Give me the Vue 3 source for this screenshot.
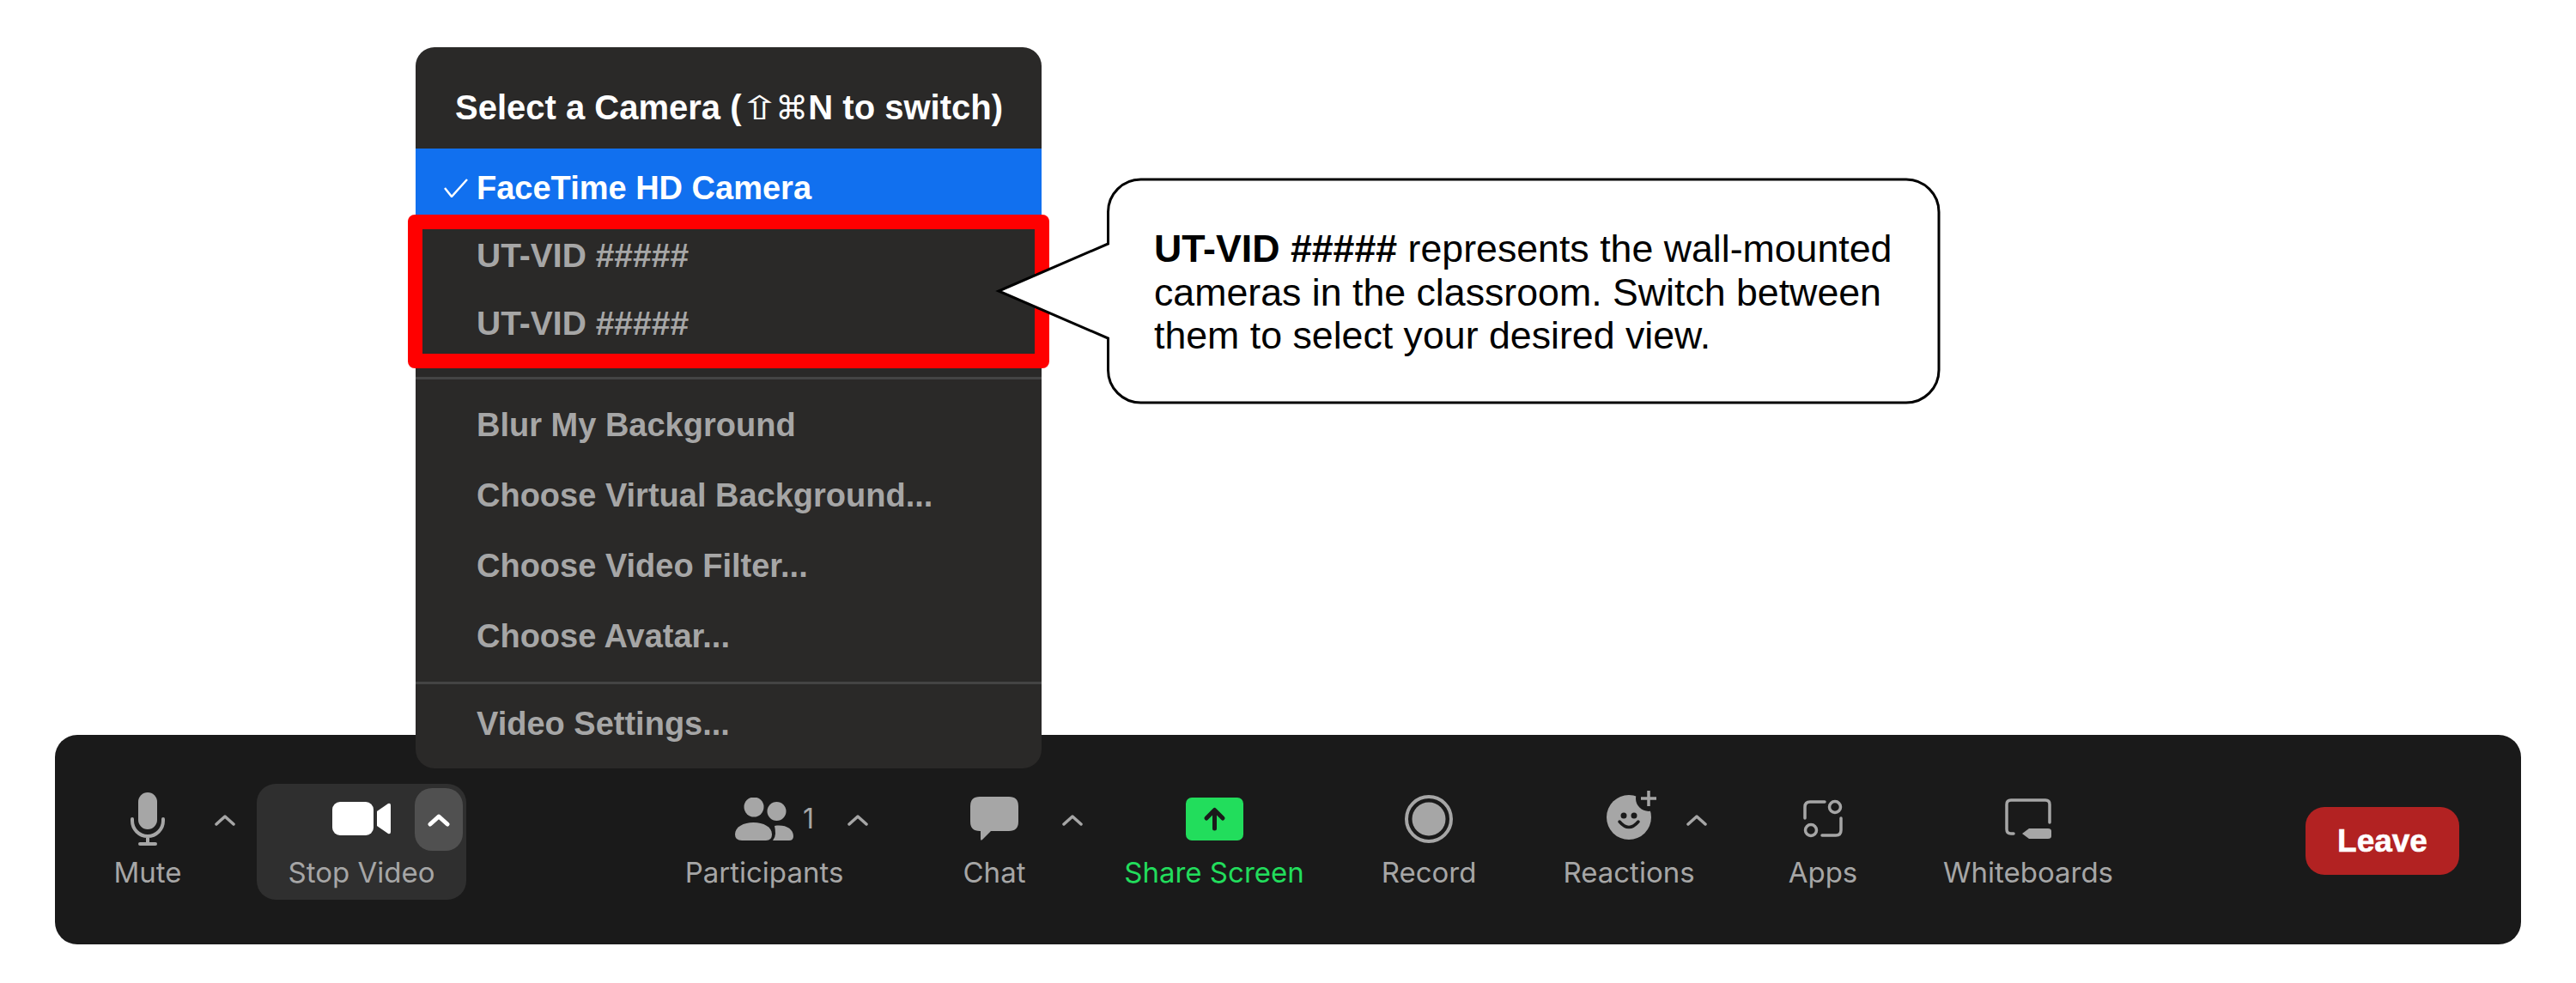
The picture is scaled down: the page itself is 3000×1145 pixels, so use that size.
<script setup>
const devices = ['UT-VID #####', 'UT-VID #####']
const backgrounds = ['Blur My Background', 'Choose Virtual Background...', 'Choose Video Filter...', 'Choose Avatar...']
</script>

<template>
  <div class="page">
    <!-- camera popup, sits over the toolbar -->
    <div class="menu">
      <div class="menu-title">Select a Camera (<span class="keys shift">⇧</span><span class="keys">⌘</span>N to switch)</div>
      <div class="menu-row selected">
        <svg class="check" width="28" height="22" viewBox="0 0 28 22">
          <path d="M1 11 L9 21 L27 1" fill="none" stroke="#fff" stroke-width="2.5" />
        </svg>
        FaceTime HD Camera
      </div>
      <div class="device-row" v-for="(d, i) in devices" :key="i">{{ d }}</div>
      <div class="sep first-sep"></div>
      <div class="menu-row" v-for="b in backgrounds" :key="b">{{ b }}</div>
      <div class="sep"></div>
      <div class="menu-row">Video Settings...</div>
    </div>

    <div class="highlight"></div>

    <div class="callout">
      <svg class="callout-shape" width="1102" height="266" viewBox="0 0 1102 266">
        <path
          d="M130.5 40 A38 38 0 0 1 168.5 2 H1060 A38 38 0 0 1 1098 40 V224 A38 38 0 0 1 1060 262 H168.5 A38 38 0 0 1 130.5 224 V187 L3 132 L130.5 77 Z"
          fill="#fff" stroke="#000" stroke-width="3" />
      </svg>
      <p class="callout-text">
        <b>UT-VID #####</b> represents the wall-mounted<br>
        cameras in the classroom. Switch between<br>
        them to select your desired view.
      </p>
    </div>

    <div class="toolbar">
      <div class="tool mute">
        <div class="icon">
          <svg width="40" height="62" viewBox="0 0 40 62">
            <rect x="9" y="0" width="22" height="43" rx="11" fill="#a6a6a6" />
            <path d="M2 31 v2 a18 18 0 0 0 36 0 v-2 M20 51 v9 M11 60 h18" fill="none" stroke="#a6a6a6" stroke-width="4" stroke-linecap="round" />
          </svg>
          <svg class="caret" width="24" height="14" viewBox="0 0 24 14"><path d="M2 12 L12 3 L22 12" /></svg>
        </div>
        <div class="label">Mute</div>
      </div>

      <div class="tool video">
        <div class="icon">
          <svg width="68" height="39" viewBox="0 0 68 39">
            <rect width="48" height="39" rx="9" fill="#fff" />
            <path d="M52 11 L65 2 Q68 1 68 4 V35 Q68 38 65 37 L52 28 Z" fill="#fff" />
          </svg>
          <div class="caret-box">
            <svg width="26" height="16" viewBox="0 0 26 16"><path d="M3 13 L13 4 L23 13" fill="none" stroke="#fff" stroke-width="5" stroke-linecap="round" stroke-linejoin="round" /></svg>
          </div>
        </div>
        <div class="label">Stop Video</div>
      </div>

      <div class="tool participants">
        <div class="icon">
          <svg width="68" height="50" viewBox="0 0 68 50" fill="#a6a6a6">
            <circle cx="22" cy="11" r="11.5" />
            <circle cx="48.5" cy="16" r="11" />
            <path d="M8 50 Q0 50 0 43 C0 34 10 29 21.5 29 C33 29 43 34 43 43 Q43 50 36 50 Z" />
            <path d="M46 33 C58 31 68 36 68 45 Q68 50 63 50 H44 Q47 46 47 42 Q47 37 46 33 Z" />
          </svg>
          <span class="count">1</span>
          <svg class="caret" width="24" height="14" viewBox="0 0 24 14"><path d="M2 12 L12 3 L22 12" /></svg>
        </div>
        <div class="label">Participants</div>
      </div>

      <div class="tool chat">
        <div class="icon">
          <svg width="56" height="51" viewBox="0 0 56 51">
            <path d="M11 0 H45 Q56 0 56 11 V29 Q56 40 45 40 H24 L14 50 Q12 52 12 49 V40 H11 Q0 40 0 29 V11 Q0 0 11 0 Z" fill="#a6a6a6" />
          </svg>
          <svg class="caret" width="24" height="14" viewBox="0 0 24 14"><path d="M2 12 L12 3 L22 12" /></svg>
        </div>
        <div class="label">Chat</div>
      </div>

      <div class="tool share">
        <div class="icon">
          <svg width="67" height="50" viewBox="0 0 67 50">
            <rect width="67" height="50" rx="7" fill="#22dd5c" />
            <path d="M33.5 36 V15 M24 24 L33.5 14.5 L43 24" fill="none" stroke="#1a1a1a" stroke-width="5" stroke-linecap="round" stroke-linejoin="round" />
          </svg>
        </div>
        <div class="label">Share Screen</div>
      </div>

      <div class="tool record">
        <div class="icon">
          <svg width="56" height="56" viewBox="0 0 56 56">
            <circle cx="28" cy="28" r="26" fill="none" stroke="#a6a6a6" stroke-width="4" />
            <circle cx="28" cy="28" r="19.5" fill="#a6a6a6" />
          </svg>
        </div>
        <div class="label">Record</div>
      </div>

      <div class="tool reactions">
        <div class="icon">
          <svg class="smile" width="64" height="58" viewBox="0 0 64 58">
            <circle cx="32" cy="32" r="26" fill="#a6a6a6" />
            <circle cx="55" cy="10" r="15" fill="#1a1a1a" />
            <path d="M55 1 V19 M46 10 H64" fill="none" stroke="#a6a6a6" stroke-width="3.5" />
            <circle cx="26" cy="30" r="3.5" fill="#1a1a1a" />
            <circle cx="38" cy="30" r="3.5" fill="#1a1a1a" />
            <path d="M21 37 Q32 50 43 37" fill="none" stroke="#1a1a1a" stroke-width="3.5" stroke-linecap="round" />
          </svg>
          <svg class="caret" width="24" height="14" viewBox="0 0 24 14"><path d="M2 12 L12 3 L22 12" /></svg>
        </div>
        <div class="label">Reactions</div>
      </div>

      <div class="tool apps">
        <div class="icon">
          <svg width="46" height="45" viewBox="0 0 46 45" fill="none" stroke="#a6a6a6" stroke-width="3.5" stroke-linecap="round">
            <path d="M2 22 V9 Q2 3 8 3 H25" />
            <circle cx="37" cy="9" r="6.5" />
            <circle cx="9" cy="36" r="6.5" />
            <path d="M44 22 V36 Q44 42 38 42 H22" />
          </svg>
        </div>
        <div class="label">Apps</div>
      </div>

      <div class="tool boards">
        <div class="icon">
          <svg width="54" height="47" viewBox="0 0 54 47">
            <path d="M10 41 H7 Q2 41 2 36 V7 Q2 2 7 2 H47 Q52 2 52 7 V28" fill="none" stroke="#a6a6a6" stroke-width="3.5" stroke-linecap="round" />
            <path d="M20 41 L28 35 H50 Q54 35 54 38 V44 Q54 47 50 47 H28 Z" fill="#a6a6a6" />
          </svg>
        </div>
        <div class="label">Whiteboards</div>
      </div>

      <div class="leave">Leave</div>
    </div>
  </div>
</template>

<style scoped>
.page {
  position: relative;
  width: 3000px;
  height: 1145px;
  box-sizing: border-box;
  padding: 0 64px 45px;
  display: flex;
  flex-direction: column;
  justify-content: flex-end;
  background: #fff;
  font-family: "Liberation Sans", "DejaVu Sans", sans-serif;
  overflow: hidden;
}

/* popup */
.menu {
  position: absolute;
  z-index: 2;
  left: 484px;
  top: 55px;
  width: 729px;
  height: 840px;
  background: #2a2928;
  border-radius: 22px;
  overflow: hidden;
  font-weight: 700;
  font-size: 38px;
  color: #a6a6a6;
}
.menu-title {
  height: 118px;
  line-height: 141px;
  padding-left: 46px;
  color: #fff;
  font-size: 40px;
  white-space: nowrap;
}
.keys {
  display: inline-block;
  font-family: "DejaVu Sans", sans-serif;
  font-weight: 400;
  font-size: 38px;
  line-height: 1;
}
.shift {
  margin: 0 3px 0 5px;
  transform: scaleX(1.5);
}
.menu-row {
  height: 82px;
  line-height: 82px;
  padding-left: 71px;
  position: relative;
}
.menu-row.selected {
  height: 85px;
  line-height: 93px;
  background: #1170ef;
  color: #fff;
}
.check {
  position: absolute;
  left: 33px;
  top: 35px;
}
.device-row {
  height: 79px;
  line-height: 79px;
  padding-left: 71px;
  font-size: 39px;
}
.sep {
  height: 3px;
  margin: 12px 0 5px;
  background: #444;
}
.first-sep {
  margin: 23px 0 12px;
}

.highlight {
  position: absolute;
  z-index: 3;
  left: 475px;
  top: 250px;
  width: 747px;
  height: 179px;
  box-sizing: border-box;
  border: 17px solid #f00;
  border-radius: 8px;
}

.callout {
  position: absolute;
  z-index: 4;
  left: 1160px;
  top: 207px;
  width: 1102px;
  height: 266px;
}
.callout-shape {
  position: absolute;
  left: 0;
  top: 0;
  overflow: visible;
}
.callout-text {
  position: relative;
  margin: 0;
  padding: 58px 0 0 184px;
  font-size: 44.7px;
  line-height: 50.5px;
  color: #000;
  white-space: nowrap;
}

/* bottom bar */
.toolbar {
  height: 244px;
  box-sizing: border-box;
  padding: 57px 72px 0 46px;
  display: flex;
  align-items: flex-start;
  background: #1a1a1a;
  border-radius: 26px;
}
.tool {
  height: 135px;
  flex: none;
}
.icon {
  position: relative;
  height: 81px;
  display: flex;
  align-items: center;
  justify-content: center;
}
.label {
  height: 44px;
  line-height: 44px;
  text-align: center;
  font-family: Inter, "Liberation Sans", sans-serif;
  font-size: 33px;
  color: #a6a6a6;
  white-space: nowrap;
}
.caret {
  position: absolute;
  top: 35px;
  fill: none;
  stroke: #a6a6a6;
  stroke-width: 3.5;
  stroke-linecap: round;
  stroke-linejoin: round;
}
.mute { width: 124px; }
.mute .caret { left: 140px; }
.video {
  width: 244px;
  margin-left: 65px;
  background: #2f2f2f;
  border-radius: 22px;
}
.caret-box {
  position: absolute;
  left: 184px;
  top: 5px;
  width: 56px;
  height: 73px;
  display: flex;
  align-items: center;
  justify-content: center;
  background: #505050;
  border-radius: 20px;
}
.participants { width: 200px; margin-left: 247px; }
.participants .caret { left: 197px; }
.count {
  position: absolute;
  left: 145px;
  top: 25px;
  font-family: Inter, "Liberation Sans", sans-serif;
  font-size: 32px;
  line-height: 32px;
  color: #a6a6a6;
}
.chat { width: 80px; margin-left: 128px; }
.chat .caret { left: 119px; }
.share { width: 212px; margin-left: 110px; }
.share .label { color: #22dd5c; }
.record { width: 114px; margin-left: 87px; }
.reactions { width: 160px; margin-left: 96px; }
.reactions .caret { left: 147px; }
.smile { margin-bottom: 9px; }
.apps { width: 84px; margin-left: 104px; }
.boards { width: 204px; margin-left: 95px; }
.leave {
  margin: 27px 0 0 auto;
  width: 179px;
  height: 79px;
  line-height: 79px;
  text-align: center;
  background: #b22222;
  border-radius: 22px;
  color: #fff;
  font-weight: 700;
  font-size: 37px;
  -webkit-text-stroke: 0.6px #fff;
}
</style>
